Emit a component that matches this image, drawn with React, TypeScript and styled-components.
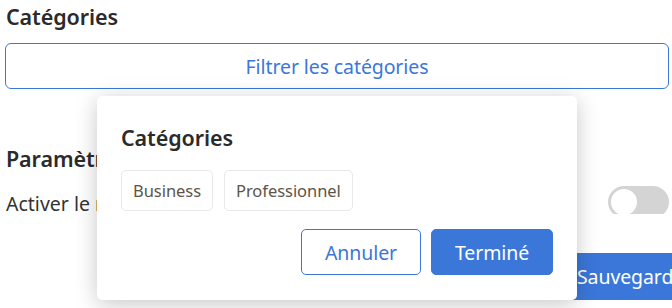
import React from "react";
import styled, { createGlobalStyle } from "styled-components";

const Global = createGlobalStyle`
  html, body { margin: 0; padding: 0; background: #fff; }
  body { font-family: "Noto Sans", "Open Sans", sans-serif; color: #2b2b2b; width: 672px; height: 308px; overflow: hidden; }
  * { box-sizing: border-box; }
`;

const BLUE = "#3b77d9";

const Page = styled.div`
  position: relative;
  width: 672px;
  height: 308px;
  overflow: hidden;
  display: flex;
  flex-direction: column;
`;

const Content = styled.div`
  display: flex;
  flex-direction: column;
  padding: 0 3px 0 5px;
`;

const Heading = styled.h2`
  margin: 0;
  font-size: 21.5px;
  font-weight: 600;
  line-height: 28px;
  padding-left: 1px;
  color: #2b2b2b;
  letter-spacing: -0.1px;
`;

const TopHeading = styled(Heading)`
  margin-top: 3px;
`;

const SettingsHeading = styled(Heading)`
  margin-top: 56px;
`;

const FilterButton = styled.button`
  margin-top: 12px;
  height: 46px;
  width: 100%;
  background: #fff;
  border: 1px solid ${BLUE};
  border-radius: 6px;
  color: ${BLUE};
  font-family: inherit;
  font-size: 19.5px;
  letter-spacing: -0.1px;
  padding: 0;
`;

const SettingRow = styled.div`
  margin-top: 13px;
  display: flex;
  align-items: flex-start;
  justify-content: space-between;
  height: 28px;
`;

const SettingLabel = styled.span`
  font-size: 19.5px;
  line-height: 28px;
  padding-top: 4px;
  padding-left: 1px;
  color: #333;
  white-space: nowrap;
`;

const ToggleClip = styled.div`
  height: 28px;
  overflow: hidden;
  flex-shrink: 0;
`;

const Toggle = styled.div`
  width: 61px;
  height: 32px;
  border-radius: 16px;
  background: #d4d4d4;
  display: flex;
  align-items: center;
  padding-left: 3px;
`;

const Knob = styled.div`
  width: 26px;
  height: 26px;
  border-radius: 50%;
  background: #fff;
`;

const Footer = styled.div`
  display: flex;
  justify-content: flex-start;
  padding-top: 39px;
  padding-left: 556px;
`;

const SaveButton = styled.button`
  height: 47px;
  padding: 0 16px;
  background: ${BLUE};
  color: #fff;
  border: none;
  border-radius: 5px;
  font-family: inherit;
  font-size: 19.5px;
  letter-spacing: -0.1px;
  white-space: nowrap;
  flex-shrink: 0;
`;

const Popover = styled.div`
  position: absolute;
  left: 97px;
  top: 96px;
  width: 480px;
  height: 204px;
  background: #fff;
  border-radius: 5px;
  box-shadow: 0 4px 22px rgba(0, 0, 0, 0.22);
  padding: 22px 24px 0 24px;
  display: flex;
  flex-direction: column;
`;

const PopTitle = styled.h3`
  margin: 0;
  font-size: 21.5px;
  font-weight: 600;
  line-height: 40px;
  color: #2b2b2b;
  letter-spacing: -0.1px;
`;

const Chips = styled.div`
  display: flex;
  gap: 11px;
  margin-top: 12px;
`;

const Chip = styled.span`
  height: 41px;
  display: inline-flex;
  align-items: center;
  padding: 0 11px;
  border: 1px solid #e8e8e8;
  border-radius: 5px;
  font-size: 16.5px;
  color: #5e5447;
  letter-spacing: -0.05px;
`;

const Actions = styled.div`
  display: flex;
  justify-content: flex-end;
  gap: 10px;
  margin-top: 18px;
`;

const ActionButton = styled.button<{ $primary?: boolean }>`
  height: 46px;
  width: ${(p) => (p.$primary ? "122px" : "120px")};
  border-radius: 5px;
  font-family: inherit;
  font-size: 19.5px;
  letter-spacing: -0.1px;
  padding: 0;
  border: 1px solid ${BLUE};
  background: ${(p) => (p.$primary ? BLUE : "#fff")};
  color: ${(p) => (p.$primary ? "#fff" : BLUE)};
`;

export default function App() {
  return (
    <Page>
      <Global />
      <Content>
        <TopHeading>Catégories</TopHeading>
        <FilterButton>Filtrer les catégories</FilterButton>
        <SettingsHeading>Paramètres</SettingsHeading>
        <SettingRow>
          <SettingLabel>Activer le mode hors ligne</SettingLabel>
          <ToggleClip>
            <Toggle>
              <Knob />
            </Toggle>
          </ToggleClip>
        </SettingRow>
        <Footer>
          <SaveButton>Sauvegarder</SaveButton>
        </Footer>
      </Content>
      <Popover>
        <PopTitle>Catégories</PopTitle>
        <Chips>
          <Chip>Business</Chip>
          <Chip>Professionnel</Chip>
        </Chips>
        <Actions>
          <ActionButton>Annuler</ActionButton>
          <ActionButton $primary>Terminé</ActionButton>
        </Actions>
      </Popover>
    </Page>
  );
}
